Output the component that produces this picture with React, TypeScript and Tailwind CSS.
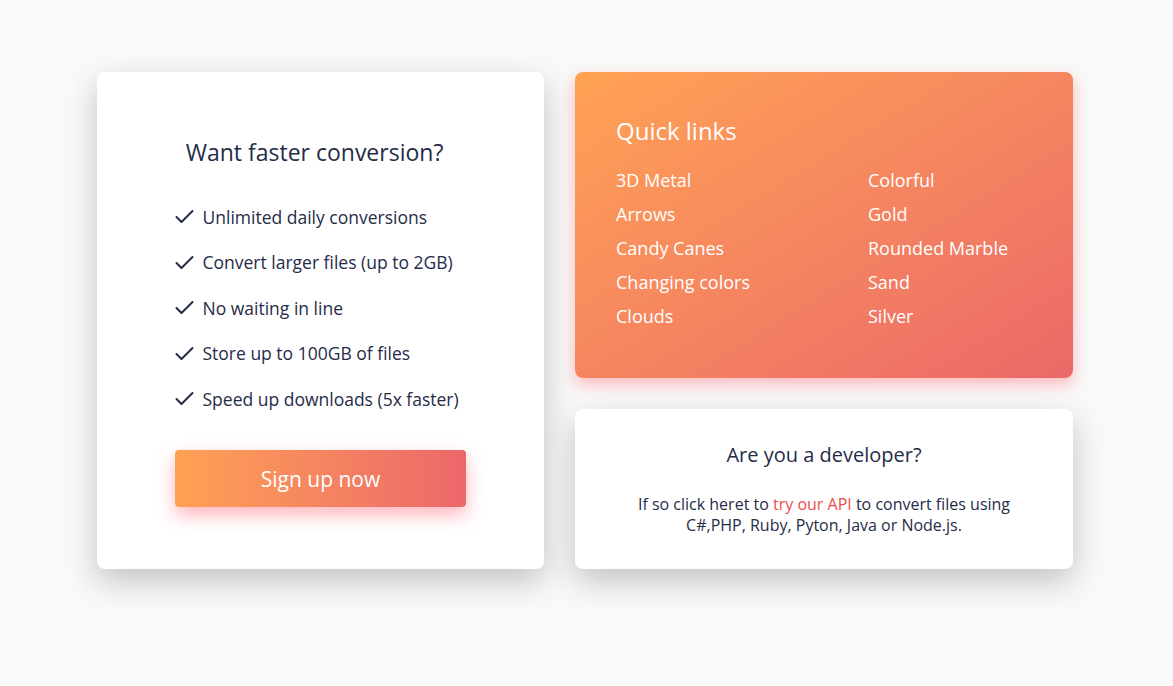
import React from "react";

const Check = () => (
  <svg width="19" height="15" viewBox="0 0 19 15" fill="none" className="shrink-0">
    <path d="M1.5 8 L6.5 13 L17.5 2" stroke="#232a45" strokeWidth="2" strokeLinecap="round" strokeLinejoin="round" />
  </svg>
);

const features = [
  "Unlimited daily conversions",
  "Convert larger files (up to 2GB)",
  "No waiting in line",
  "Store up to 100GB of files",
  "Speed up downloads (5x faster)",
];

const col1 = ["3D Metal", "Arrows", "Candy Canes", "Changing colors", "Clouds"];
const col2 = ["Colorful", "Gold", "Rounded Marble", "Sand", "Silver"];

export default function App() {
  return (
    <div
      className="min-h-[686px] w-full bg-[#f9f9f9] flex justify-center pt-[72px] pr-[3px]"
      style={{ fontFamily: '"Segoe UI", "Open Sans", sans-serif' }}
    >
      <div className="flex gap-[31px]">
        <div className="w-[447px] h-[497px] bg-white rounded-[8px] shadow-[0_12px_32px_rgba(0,0,0,0.22)] flex flex-col items-center pt-[64px]">
          <div className="text-[23px] leading-[32px] text-[#262c48] pr-[12px]">Want faster conversion?</div>
          <div className="w-[292px] mt-[26px] flex flex-col">
            {features.map((f) => (
              <div key={f} className="h-[45.5px] flex items-center gap-[9px] text-[17.5px] text-[#262c48]">
                <Check />
                <span>{f}</span>
              </div>
            ))}
          </div>
          <button className="mt-[28px] w-[291px] h-[57px] rounded-[4px] bg-gradient-to-r from-[#ffa153] to-[#eb6769] text-white text-[21px] pt-[4px] shadow-[0_8px_18px_rgba(255,90,110,0.45)]">
            Sign up now
          </button>
        </div>
        <div className="flex flex-col gap-[31px]">
          <div className="w-[498px] h-[306px] rounded-[8px] bg-gradient-to-br from-[#ffa253] to-[#eb6868] shadow-[0_6px_16px_rgba(255,100,110,0.45)] pl-[41px] pt-[43px] text-white">
            <div className="text-[24px] leading-[32px]">Quick links</div>
            <div className="mt-[16px] grid grid-cols-[252px_1fr]">
              <div className="flex flex-col">
                {col1.map((l) => (
                  <div key={l} className="h-[34px] flex items-center text-[18px]">{l}</div>
                ))}
              </div>
              <div className="flex flex-col">
                {col2.map((l) => (
                  <div key={l} className="h-[34px] flex items-center text-[18px]">{l}</div>
                ))}
              </div>
            </div>
          </div>
          <div className="w-[498px] h-[160px] rounded-[8px] bg-white shadow-[0_12px_32px_rgba(0,0,0,0.22)] flex flex-col items-center pt-[32px] text-[#262c48]">
            <div className="text-[20px] leading-[28px]">Are you a developer?</div>
            <p className="mt-[25px] text-[16px] leading-[21px] text-center w-[400px]">
              If so click heret to <span className="text-[#f04c4c]">try our API</span> to convert files using C#,PHP, Ruby, Pyton, Java or Node.js.
            </p>
          </div>
        </div>
      </div>
    </div>
  );
}
